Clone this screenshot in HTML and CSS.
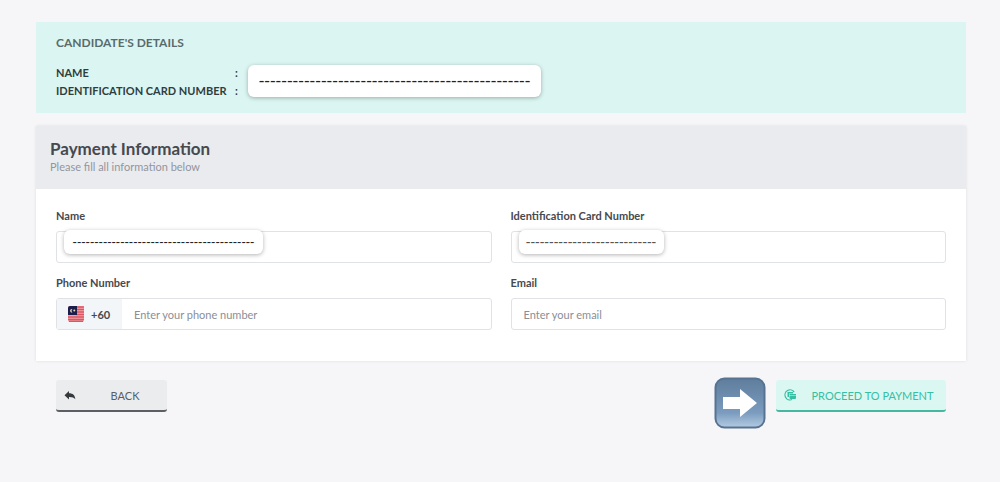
FILE: index.html
```html
<!DOCTYPE html>
<html lang="en">
<head>
    <meta charset="UTF-8">
    <meta name="viewport" content="width=device-width, initial-scale=1.0">
    <title>Payment Information</title>
    <link rel="stylesheet" href="styles.css">
</head>
<body>

    <main class="page">
        <section class="candidate">
            <h2>CANDIDATE'S DETAILS</h2>
            <div class="candidate-info">
                <table class="candidate-table">
                    <tr>
                        <th>NAME</th>
                        <td>:</td>
                    </tr>
                    <tr>
                        <th>IDENTIFICATION CARD NUMBER</th>
                        <td>:</td>
                    </tr>
                </table>
                <div class="mask mask-candidate">------------------------------------------------</div>
            </div>
        </section>

        <form id="payment-form" class="card">
            <div class="card-header">
                <h1>Payment Information</h1>
                <p>Please fill all information below</p>
            </div>
            <div class="card-body">
                <div class="field">
                    <label for="name">Name</label>
                    <div class="control">
                        <input type="text" id="name" name="name">
                        <span class="mask mask-name">------------------------------------------</span>
                    </div>
                </div>
                <div class="field">
                    <label for="ic">Identification Card Number</label>
                    <div class="control">
                        <input type="text" id="ic" name="ic">
                        <span class="mask mask-ic">----------------------------</span>
                    </div>
                </div>
                <div class="field">
                    <label for="phone">Phone Number</label>
                    <div class="control">
                        <span class="prefix">
                            <svg class="flag" viewBox="0 0 16 16" aria-hidden="true">
                                <rect width="16" height="16" rx="2" fill="#f3a4ab"/>
                                <path d="M8 1h8M8 3.500h8M8 6h8M8 8.500h8M0 11h16M0 13.500h16M1 15.500h14" stroke="#dc5561" stroke-width="1.300"/>
                                <path d="M2 0h7v9H0V2a2 2 0 0 1 2-2z" fill="#1b1d4d"/>
                                <path d="M4.500 3a1.800 1.800 0 1 0 0 3.400 2 2 0 0 1 0-3.400z" fill="#e9d9b0"/>
                                <circle cx="6.300" cy="4.600" r="1" fill="#e9d9b0"/>
                            </svg>
                            +60
                        </span>
                        <input type="tel" id="phone" name="phone" placeholder="Enter your phone number">
                    </div>
                </div>
                <div class="field">
                    <label for="email">Email</label>
                    <div class="control">
                        <input type="email" id="email" name="email" placeholder="Enter your email">
                    </div>
                </div>
            </div>
        </form>

        <div class="actions">
            <button type="button" class="btn btn-back">
                <span class="btn-icon">
                    <svg width="12" height="12" viewBox="0 0 12 12" aria-hidden="true">
                        <path d="M5 2v2.200c4 0 6 2 6.300 6C10 8.600 8 7.800 5 7.900V10.500L.5 6.200z" fill="#35383c"/>
                    </svg>
                </span>
                <span class="btn-text">BACK</span>
            </button>
            <div class="actions-right">
                <svg class="arrow" viewBox="0 0 52 52" aria-hidden="true">
                    <defs>
                        <linearGradient id="tile" x1="0" y1="0" x2="0" y2="1">
                            <stop offset="0" stop-color="#5f7d9c"/>
                            <stop offset="0.700" stop-color="#7b9cbf"/>
                            <stop offset="1" stop-color="#b3cbe2"/>
                        </linearGradient>
                    </defs>
                    <rect x="1.500" y="1.500" width="49" height="49" rx="9" fill="url(#tile)" stroke="#587391" stroke-width="2"/>
                    <path d="M9 20h17v-8l17 14-17 14v-8H9z" fill="#fff"/>
                </svg>
                <button type="submit" form="payment-form" class="btn btn-pay">
                    <span class="btn-icon">
                        <svg width="12" height="12" viewBox="0 0 12 12" aria-hidden="true">
                            <path d="M10.200 3.200A5 5 0 1 0 8 10.500" fill="none" stroke="#35bfa3" stroke-width="1.200"/>
                            <path d="M3.500 3h5.500v1.500H5v3.500H3.500z" fill="#35bfa3"/>
                            <path d="M5.500 5H12v1H5.500zM5.500 6.500H12V9a1 1 0 0 1-1 1H6.500a1 1 0 0 1-1-1z" fill="#35bfa3"/>
                        </svg>
                    </span>
                    <span class="btn-text">PROCEED TO PAYMENT</span>
                </button>
            </div>
        </div>
    </main>

</body>
</html>
```
FILE: styles.css
```css
* {
    box-sizing: border-box;
}

body {
    margin: 0;
    background-color: #f6f6f9;
    color: #46494e;
    font-family: Lato, "Liberation Sans", sans-serif;
    font-size: 11px;
}

h1, h2, p {
    margin: 0;
}

.page {
    padding: 22px 34px 0 36px;
}

/* Candidate's details */
.candidate {
    padding: 12px 20px 13px;
    background-color: #dbf6f2;
}

.candidate h2 {
    margin-bottom: 12px;
    color: #5a6b6c;
    font-size: 12px;
    line-height: 18px;
}

.candidate-info {
    display: flex;
    position: relative;
}

.candidate-table {
    border-collapse: collapse;
    color: #2f3d3f;
    font-weight: bold;
    line-height: 18px;
}

.candidate-table th,
.candidate-table td {
    padding: 0;
    text-align: left;
    white-space: nowrap;
}

.candidate-table th {
    width: 179px;
}

/* White patches that hide personal data */
.mask {
    position: absolute;
    background-color: #fff;
    border-radius: 6px;
    box-shadow: 0 1px 4px rgba(0, 0, 0, 0.3);
    color: #222;
    font-family: "Liberation Sans", sans-serif;
    text-align: center;
    white-space: nowrap;
}

.mask-candidate {
    top: 1px;
    left: 192px;
    width: 293px;
    font-size: 17px;
    line-height: 32px;
}

.mask-name,
.mask-ic {
    top: -2px;
    left: 7px;
    line-height: 24px;
}

.mask-name {
    width: 199px;
    font-size: 13px;
}

.mask-ic {
    width: 145px;
    color: #555;
    font-size: 14px;
}

/* Payment form */
.card {
    margin-top: 13px;
    background-color: #fff;
    box-shadow: 0 0 3px rgba(0, 0, 0, 0.1);
}

.card-header {
    padding: 13px 14px 15px;
    background-color: #eaebee;
}

.card-header h1 {
    font-size: 17px;
    line-height: 20px;
}

.card-header p {
    color: #93959d;
    line-height: 15px;
}

.card-body {
    display: grid;
    grid-template-columns: 1fr 1fr;
    gap: 12px 19px;
    padding: 19px 20px 31px;
}

.field label {
    display: block;
    margin-bottom: 7px;
    font-weight: bold;
    line-height: 16px;
}

.control {
    display: flex;
    position: relative;
    height: 32px;
    border: 1px solid #e0e2e5;
    border-radius: 3px;
}

.control input {
    flex: 1;
    min-width: 0;
    padding: 0 12px;
    border: none;
    background: none;
    color: #46494e;
    font-family: inherit;
    font-size: 11px;
}

.control input::placeholder {
    color: #8b8e96;
}

.prefix {
    display: flex;
    align-items: center;
    gap: 7px;
    width: 65px;
    padding-left: 11px;
    background-color: #f3f6f9;
    font-weight: bold;
}

.flag {
    width: 16px;
    height: 16px;
}

/* Buttons */
.actions {
    display: flex;
    justify-content: space-between;
    padding: 16px 20px 0;
}

.actions-right {
    display: flex;
    align-items: flex-start;
    gap: 10px;
}

.arrow {
    width: 52px;
    height: 52px;
}

.btn {
    display: flex;
    align-items: center;
    height: 32px;
    margin-top: 3px;
    padding: 0;
    border: none;
    border-bottom: 2px solid;
    border-radius: 3px;
    font-family: inherit;
    font-size: 11px;
    cursor: pointer;
}

.btn-icon {
    display: flex;
    align-items: center;
    justify-content: center;
    width: 27px;
    height: 100%;
}

.btn-text {
    flex: 1;
    text-align: center;
}

.btn-back {
    width: 111px;
    border-color: #5c5f63;
    background-color: #ebecee;
    color: #5a5d62;
}

.btn-pay {
    width: 170px;
    border-color: #45b8a2;
    background-color: #dbf7f2;
    color: #35bfa3;
}

.btn-pay .btn-text {
    padding-right: 4px;
}
```
